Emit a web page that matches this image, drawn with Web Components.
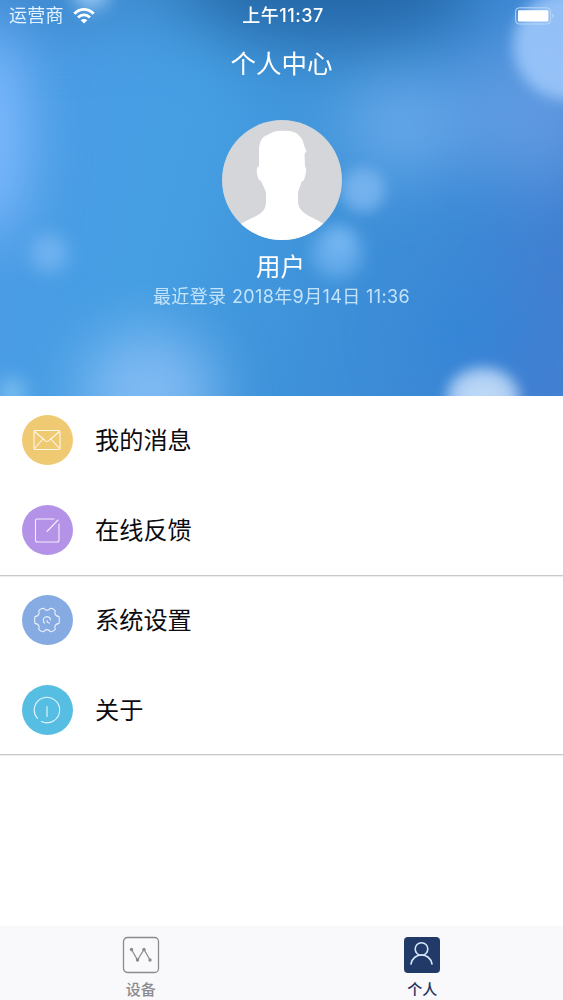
<!DOCTYPE html>
<html lang="zh-CN">
<head>
<meta charset="utf-8">
<title>个人中心</title>
<style>
html, body { margin: 0; height: 100%; background: #fff; }
body { font-family: Inter, "Noto Sans CJK SC", sans-serif; overflow: hidden; }
</style>
</head>
<body>
<profile-page></profile-page>
<script>
const define = (name, html) => customElements.define(name, class extends HTMLElement {
  constructor() {
    super();
    const t = document.createElement('template');
    t.innerHTML = html;
    this.attachShadow({ mode: 'open' }).append(t.content.cloneNode(true));
  }
});

define('status-bar', `
<style>
:host { display: grid; grid-template-columns: 1fr auto 1fr; align-items: center; height: 32px; padding: 0 8px 0 9px; font-size: 18px; line-height: 32px; color: #fff; }
.left { display: flex; align-items: center; gap: 9px; color: #e2f3ff; letter-spacing: .2px; }
.time { font-weight: 500; letter-spacing: .5px; padding-left: 2px; }
.battery { justify-self: end; }
svg { display: block; }
</style>
<div class="left"><span>运营商</span>
<svg width="22" height="16" viewBox="0 0 22 16" fill="none" stroke="#fff" stroke-width="2.8"><path d="M1.4 5.8C7-.1 15-.1 20.6 5.8M5 9.5C8.5 6 13.5 6 17 9.5"/><path d="M7.7 12.3C9.5 10.5 12.5 10.5 14.3 12.3L11 15.6Z" fill="#fff" stroke="none"/></svg></div>
<span class="time">上午11:37</span>
<svg class="battery" width="40" height="18" viewBox="0 0 40 18"><rect x=".6" y=".8" width="35" height="16.2" rx="3.5" fill="none" stroke="#b8d6f7" stroke-width="1"/><rect x="3" y="3.2" width="30.4" height="11.4" rx="1" fill="#fff"/><path d="M37.3 6.2Q40.4 8.8 37.3 11.4Z" fill="#b8d6f7"/></svg>`);

define('user-avatar', `
<style>:host { display: block; width: 120px; height: 120px; border-radius: 50%; overflow: hidden; background: #d4d6d9; } svg { display: block; }</style>
<svg width="120" height="120" viewBox="0 0 120 120"><path fill="#fff" d="M37 46V30C37 22 40 16 46 15C50 11 58 10 66 11C75 11 81 18 82 25L83 28L84.500 31L82.500 34L83 47C85 48 84 53 83 57L81.500 61H80L76 72V81C76 90 83 94 91 98L102 104V120H18V104L32 97C41 93 44 89 44 81V72L39 61L37 60C35 55 33 48 37 46Z"/></svg>`);

define('bokeh-sky', `
<style>:host { display: block; } svg { display: block; width: 100%; height: 100%; } filter { color-interpolation-filters: sRGB; }</style>
<svg viewBox="0 0 563 396" preserveAspectRatio="none">
<defs>
<linearGradient id="base" gradientUnits="userSpaceOnUse" x1="0" y1="100" x2="563" y2="250"><stop offset="0" stop-color="#4c9ce6"/><stop offset=".32" stop-color="#469fe3"/><stop offset=".6" stop-color="#3e92d9"/><stop offset=".85" stop-color="#3c88d6"/><stop offset="1" stop-color="#4280d2"/></linearGradient>
<filter id="wide" x="-100%" y="-150%" width="300%" height="400%"><feGaussianBlur stdDeviation="34"/></filter>
<filter id="mid" x="-100%" y="-100%" width="300%" height="300%"><feGaussianBlur stdDeviation="28"/></filter>
<filter id="soft" x="-60%" y="-60%" width="220%" height="220%"><feGaussianBlur stdDeviation="9"/></filter>
<filter id="edge" x="-60%" y="-60%" width="220%" height="220%"><feGaussianBlur stdDeviation="7"/></filter>
</defs>
<rect width="563" height="396" fill="url(#base)"/>
<g filter="url(#wide)">
<ellipse cx="325" cy="-20" rx="155" ry="68" fill="#205f9f" opacity=".85"/>
<ellipse cx="65" cy="-20" rx="110" ry="42" fill="#3477b8" opacity=".6"/>
<ellipse cx="530" cy="110" rx="75" ry="75" fill="#72a4e6" opacity=".65"/>
<ellipse cx="400" cy="125" rx="58" ry="52" fill="#7ab5f1" opacity=".7"/>
<ellipse cx="470" cy="335" rx="60" ry="30" fill="#2585dc" opacity=".45"/>
</g>
<g filter="url(#mid)">
<ellipse cx="-12" cy="135" rx="40" ry="105" fill="#84bcff" opacity=".9"/>
<ellipse cx="149" cy="392" rx="68" ry="62" fill="#8fc2f7" opacity=".78"/>
</g>
<g filter="url(#soft)">
<circle cx="337" cy="252" r="25" fill="#80bdf8" opacity=".65"/>
<circle cx="49" cy="253" r="19" fill="#7ebaf4" opacity=".75"/>
<circle cx="12" cy="393" r="15" fill="#83c3f1" opacity=".8"/>
<circle cx="91" cy="-9" r="18" fill="#a2cffa" opacity=".9"/>
</g>
<g filter="url(#edge)">
<circle cx="568" cy="45" r="55" fill="#a0c9fb" opacity=".85"/>
<circle cx="363" cy="190" r="22" fill="#83bbf3" opacity=".75"/>
<circle cx="340" cy="240" r="13" fill="#88c2f9" opacity=".4"/>
<ellipse cx="483" cy="398" rx="36" ry="30" fill="#bddaf9" opacity=".75"/>
</g>
<ellipse cx="483" cy="396" rx="28" ry="20" fill="#d2e5fb" opacity=".6" filter="url(#soft)"/>
</svg>`);

define('profile-header', `
<style>
:host { position: relative; z-index: 0; display: flex; flex-direction: column; align-items: stretch; height: 396px; overflow: hidden; color: #fff; text-align: center; }
bokeh-sky { position: absolute; inset: 0; z-index: -1; }
.title { height: 64px; line-height: 64px; font-size: 25.5px; }
user-avatar { margin: 24px auto 0 221.5px; }
.name { height: 34px; margin-top: 10px; line-height: 34px; font-size: 24.5px; padding-right: 2px; }
.login { line-height: 26px; font-size: 18px; letter-spacing: .38px; white-space: nowrap; color: #c3e3fb; }
</style>
<bokeh-sky></bokeh-sky>
<status-bar></status-bar>
<div class="title">个人中心</div>
<user-avatar></user-avatar>
<div class="name">用户</div>
<div class="login">最近登录 2018年9月14日 11:36</div>`);

define('menu-row', `
<style>
:host { display: flex; align-items: center; gap: 22px; height: 90px; padding-left: 22px; font-size: 24.2px; color: #0b0b10; }
.icon { box-sizing: border-box; display: flex; align-items: center; justify-content: center; width: 51px; height: 50px; padding-right: 1px; border-radius: 50%; background: var(--tint); }
.label { margin-bottom: 3px; }
</style>
<div class="icon"><slot name="icon"></slot></div><span class="label"><slot></slot></span>`);

define('menu-list', `
<style>
:host { display: block; }
.group { height: 180px; }
.line { height: 1px; margin-bottom: -1px; background: #c9c9cb; box-shadow: 0 1px #ededee; }
.last { height: 179px; }
svg { display: block; fill: none; stroke: #fff; stroke-opacity: .85; stroke-width: 1.1; stroke-linecap: round; stroke-linejoin: round; }
</style>
<div class="group">
<menu-row style="--tint:#f0c973"><svg slot="icon" width="28" height="22" viewBox="0 0 28 22"><rect x="1" y="1.500" width="26" height="19" rx="1.500"/><path d="M1.500 2.500L11.500 11Q14 14 16.500 11L26.500 2.500M1.500 19.500L10 10M26.500 19.500L18 10"/></svg>我的消息</menu-row>
<menu-row style="--tint:#b392e7"><svg slot="icon" width="28" height="28" viewBox="0 0 28 28"><path d="M21 3H4Q2.500 3 2.500 4.500V24Q2.500 26 4.500 26H24Q26 26 26 24V8M25 4L14 15.500"/></svg>在线反馈</menu-row>
</div>
<div class="line"></div>
<div class="group last">
<menu-row style="--tint:#86aae2"><svg slot="icon" width="28" height="28" viewBox="0 0 28 28"><path d="M8.800 2.500L10.500 2.200Q14 6.500 17.500 2.200L19.200 2.500Q21.500 3.500 22.300 4.800Q20.500 9.500 26 10.600Q26.900 14 26 17.400Q20.500 18.500 22.300 23.200Q21.500 24.500 19.200 25.500L17.500 25.800Q14 21.500 10.500 25.800L8.800 25.500Q6.500 24.500 5.700 23.200Q7.500 18.500 2 17.400Q1.100 14 2 10.600Q7.500 9.500 5.700 4.800Q6.500 3.500 8.800 2.500Z"/><path d="M11.500 17C9.500 15 10 12 12.500 11C15 10 17.500 11.500 17.500 14M14 14.500Q14 17 16.500 17"/></svg>系统设置</menu-row>
<menu-row style="--tint:#57bee3"><svg slot="icon" width="28" height="28" viewBox="0 0 28 28"><path d="M4.500 22.500A12.700 12.700 0 1 1 8.500 25.500M14 10.500V20.500"/></svg>关于</menu-row>
</div>
<div class="line"></div>`);

define('tab-item', `
<style>
:host { display: flex; flex: 1; flex-direction: column; align-items: center; padding-top: 10px; gap: 5px; font-size: 15px; line-height: 21px; font-weight: 500; }
::slotted(svg) { flex-shrink: 0; }
</style>
<slot name="icon"></slot><span><slot></slot></span>`);

define('tab-bar', `
<style>
:host { display: flex; height: 74px; background: #f9f8fb; }
svg { display: block; fill: none; }
</style>
<tab-item style="color:#8c8c90"><svg slot="icon" width="38" height="38" viewBox="0 0 38 38" stroke="#8b8b8f"><rect x="1.500" y="1.500" width="35" height="35" rx="4" stroke-width="1.300"/><path d="M9.500 13.500L15.500 24L22 13.500L28 24" stroke-width="1.200"/><g fill="#8b8b8f" stroke="none"><circle cx="9.500" cy="13.500" r="1.700"/><circle cx="15.500" cy="24" r="1.700"/><circle cx="22" cy="13.500" r="1.700"/><circle cx="28" cy="24" r="1.700"/></g></svg>设备</tab-item>
<tab-item style="color:#263660"><svg slot="icon" width="38" height="38" viewBox="0 0 38 38" stroke="#d5e6fa" stroke-width="1.600"><rect x="1" y="1" width="36" height="36" rx="4" fill="#223a68" stroke="none"/><circle cx="18.500" cy="13" r="6.300"/><path d="M8 28C10 16 27 16 29 28" stroke-linecap="round"/></svg>个人</tab-item>`);

define('profile-page', `
<style>
:host { display: flex; flex-direction: column; width: 563px; height: 1000px; background: #fff; }
tab-bar { flex-shrink: 0; margin-top: auto; }
menu-list { margin-top: -1px; }
profile-header { flex-shrink: 0; z-index: 1; }
</style>
<profile-header></profile-header><menu-list></menu-list><tab-bar></tab-bar>`);
</script>
</body>
</html>
